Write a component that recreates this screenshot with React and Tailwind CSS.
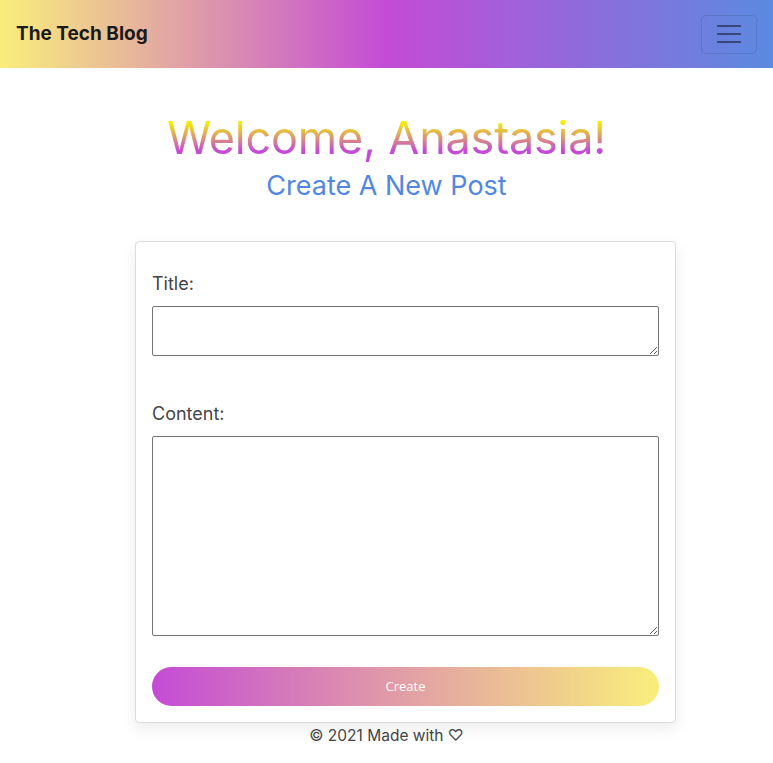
export default function App() {
  return (
    <div className="min-h-[763px] bg-white font-['Inter',sans-serif] text-[#444]">
      <nav className="flex h-[68px] items-center justify-between bg-[linear-gradient(90deg,#f9ee7b_0%,#c44bd6_50%,#5b8ae0_100%)] pl-4 pr-4">
        <span className="text-[19px] font-bold text-[#1a1a1a]">The Tech Blog</span>
        <button className="flex h-[39px] w-[56px] flex-col items-center justify-center gap-[6px] rounded-[5px] border border-[#00000018]">
          <span className="block h-[2px] w-6 bg-[#3c4580]" />
          <span className="block h-[2px] w-6 bg-[#3c4580]" />
          <span className="block h-[2px] w-6 bg-[#3c4580]" />
        </button>
      </nav>

      <header className="pt-[38px] text-center">
        <h1 className="bg-[linear-gradient(180deg,#f5f000_25%,#c44bd6_70%)] bg-clip-text text-[45px] leading-[64px] tracking-[-0.2px] text-transparent">
          Welcome, Anastasia!
        </h1>
        <h2 className="text-[27px] leading-[32px] text-[#5287e0]">Create A New Post</h2>
      </header>

      <form className="ml-[135px] mt-[39px] w-[541px] rounded-[4px] border border-[#dcdcdc] bg-white px-4 pb-4 pt-[28px] shadow-[0_6px_16px_rgba(0,0,0,0.08)]">
        <label className="block text-[18px] leading-[28px]">Title:</label>
        <textarea className="mt-[8px] block h-[50px] w-full resize-y rounded-[2px] border border-[#767676]" />
        <label className="mt-[44px] block text-[18px] leading-[28px]">Content:</label>
        <textarea className="mt-[8px] block h-[200px] w-full resize-y rounded-[2px] border border-[#767676]" />
        <button
          type="button"
          className="mt-[31px] block h-[39px] w-full rounded-full bg-[linear-gradient(90deg,#c44bd6_0%,#dd8fae_40%,#f9ee7b_100%)] font-['Open_Sans',sans-serif] text-[13px] text-white"
        >
          Create
        </button>
      </form>

      <footer className="mt-[1px] text-center text-[15.5px] leading-[24px]">© 2021 Made with ♡</footer>
    </div>
  )
}
